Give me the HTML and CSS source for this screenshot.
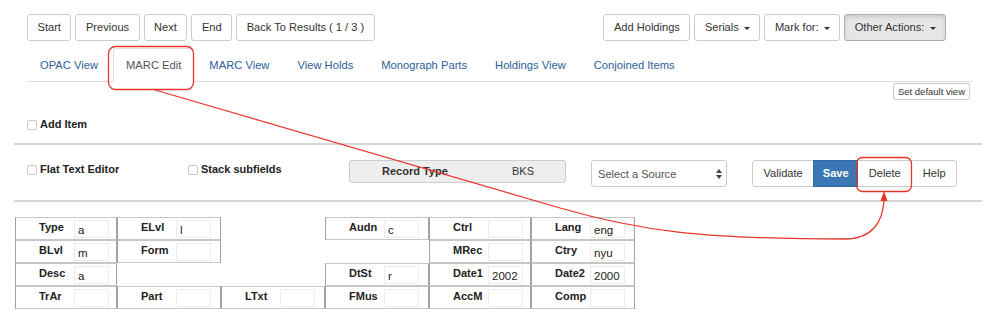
FILE: index.html
```html
<!DOCTYPE html>
<html lang="en">
<head>
    <meta charset="UTF-8">
    <meta name="viewport" content="width=device-width, initial-scale=1.0">
    <title>MARC Edit</title>
    <link rel="stylesheet" href="styles.css">
</head>
<body>
    <div class="page">
        <div class="toolbar">
            <div class="btn-row">
                <button class="btn">Start</button>
                <button class="btn">Previous</button>
                <button class="btn">Next</button>
                <button class="btn">End</button>
                <button class="btn">Back To Results ( 1 / 3 )</button>
            </div>
            <div class="btn-row">
                <button class="btn">Add Holdings</button>
                <button class="btn">Serials <span class="caret"></span></button>
                <button class="btn">Mark for: <span class="caret"></span></button>
                <button class="btn btn-active">Other Actions: <span class="caret"></span></button>
            </div>
        </div>

        <ul class="nav-tabs">
            <li><a href="#">OPAC View</a></li>
            <li class="active"><a href="#">MARC Edit</a></li>
            <li><a href="#">MARC View</a></li>
            <li><a href="#">View Holds</a></li>
            <li><a href="#">Monograph Parts</a></li>
            <li><a href="#">Holdings View</a></li>
            <li><a href="#">Conjoined Items</a></li>
        </ul>

        <div class="view-row">
            <button class="btn-xs">Set default view</button>
        </div>

        <div class="add-item">
            <label class="check"><input type="checkbox"> Add Item</label>
        </div>

        <hr class="rule">

        <div class="editor-bar">
            <label class="check flat"><input type="checkbox"> Flat Text Editor</label>
            <label class="check stack"><input type="checkbox"> Stack subfields</label>
            <div class="record-type">
                <span class="rt-label">Record Type</span>
                <span>BKS</span>
            </div>
            <div class="source-select">
                <select>
                    <option>Select a Source</option>
                </select>
                <svg class="select-arrows" width="6" height="10" viewBox="0 0 6 10">
                    <path d="M3 0 L6 4 L0 4 Z M3 10 L6 6 L0 6 Z" fill="#444"/>
                </svg>
            </div>
            <div class="btn-group">
                <button class="btn">Validate</button>
                <button class="btn btn-primary">Save</button>
                <button class="btn">Delete</button>
                <button class="btn">Help</button>
            </div>
        </div>

        <hr class="rule rule-low">

        <!-- fixed fields: empty divs keep the grid holes -->
        <div class="fixed-fields">
            <div class="ff"><span class="ff-label">Type</span><span class="ff-value">a</span></div>
            <div class="ff"><span class="ff-label">ELvl</span><span class="ff-value">l</span></div>
            <div></div>
            <div class="ff"><span class="ff-label">Audn</span><span class="ff-value">c</span></div>
            <div class="ff"><span class="ff-label">Ctrl</span><span class="ff-value"></span></div>
            <div class="ff"><span class="ff-label">Lang</span><span class="ff-value">eng</span></div>

            <div class="ff"><span class="ff-label">BLvl</span><span class="ff-value">m</span></div>
            <div class="ff"><span class="ff-label">Form</span><span class="ff-value"></span></div>
            <div></div>
            <div></div>
            <div class="ff"><span class="ff-label">MRec</span><span class="ff-value"></span></div>
            <div class="ff"><span class="ff-label">Ctry</span><span class="ff-value">nyu</span></div>

            <div class="ff"><span class="ff-label">Desc</span><span class="ff-value">a</span></div>
            <div></div>
            <div></div>
            <div class="ff"><span class="ff-label">DtSt</span><span class="ff-value">r</span></div>
            <div class="ff"><span class="ff-label">Date1</span><span class="ff-value">2002</span></div>
            <div class="ff"><span class="ff-label">Date2</span><span class="ff-value">2000</span></div>

            <div class="ff"><span class="ff-label">TrAr</span><span class="ff-value"></span></div>
            <div class="ff"><span class="ff-label">Part</span><span class="ff-value"></span></div>
            <div class="ff"><span class="ff-label">LTxt</span><span class="ff-value"></span></div>
            <div class="ff"><span class="ff-label">FMus</span><span class="ff-value"></span></div>
            <div class="ff"><span class="ff-label">AccM</span><span class="ff-value"></span></div>
            <div class="ff"><span class="ff-label">Comp</span><span class="ff-value"></span></div>
        </div>
    </div>

    <!-- red callout drawn over the page -->
    <svg class="annotations" width="1000" height="328" viewBox="0 0 1000 328">
        <rect x="108.5" y="46.5" width="85" height="43" rx="7" fill="none" stroke="#e8352a" stroke-width="1.3"/>
        <rect x="856.5" y="157.5" width="55" height="34" rx="6" fill="none" stroke="#e8352a" stroke-width="1.3"/>
        <path d="M155 90 L560 208 C640 231 700 239 845 239 C872 239 883 222 884 200" fill="none" stroke="#e8352a" stroke-width="1.3"/>
        <polygon points="884,191 880.5,201 887.5,201" fill="#e8352a"/>
    </svg>
</body>
</html>
```

FILE: styles.css
```css
body {
    font-family: "Liberation Sans", Arial, sans-serif;
    font-size: 11px;
    color: #333;
    background: #fff;
    margin: 0;
    padding: 0;
}
.page {
    padding: 14px 18px 0 14px;
}
.toolbar {
    display: flex;
    justify-content: space-between;
    margin: 0 36px 0 13px;
}
.btn-row {
    display: flex;
    gap: 4px;
}
.btn {
    font-family: inherit;
    font-size: 11.1px;
    line-height: 15px;
    color: #333;
    background: #fff;
    border: 1px solid #ccc;
    border-radius: 3px;
    padding: 5px 9.5px;
    margin: 0;
    white-space: nowrap;
}
.btn-active {
    background: #e6e6e6;
    border-color: #adadad;
    box-shadow: inset 0 2px 4px rgba(0, 0, 0, 0.12);
}
.caret {
    display: inline-block;
    width: 0;
    height: 0;
    margin-left: 2px;
    vertical-align: middle;
    border-top: 3px solid #333;
    border-left: 3px solid transparent;
    border-right: 3px solid transparent;
}
.nav-tabs {
    display: flex;
    list-style: none;
    margin: 7px 10px 0 13px;
    padding: 0;
    border-bottom: 1px solid #ddd;
    font-size: 11.2px;
}
.nav-tabs li {
    margin-right: 2px;
    margin-bottom: -1px;
}
.nav-tabs a {
    display: block;
    padding: 8px 12px;
    line-height: 16px;
    color: #2d6199;
    text-decoration: none;
    border: 1px solid transparent;
    border-radius: 3px 3px 0 0;
}
.nav-tabs li.active a {
    color: #555;
    background: #fff;
    border-color: #ddd #ddd transparent;
}
.view-row {
    display: flex;
    justify-content: flex-end;
    margin: 1px 12px 0 0;
}
.btn-xs {
    font-family: inherit;
    font-size: 9.5px;
    line-height: 13px;
    color: #333;
    background: #fff;
    border: 1px solid #ccc;
    border-radius: 2px;
    padding: 1px 4px;
    margin: 0;
}
.check {
    display: flex;
    align-items: center;
    font-weight: bold;
    line-height: 15px;
    color: #222;
}
.check input {
    appearance: none;
    -webkit-appearance: none;
    width: 10px;
    height: 10px;
    border: 1px solid #c9c9c9;
    border-radius: 2px;
    background: #fff;
    margin: 0 3px 0 0;
}
.add-item {
    margin: 17px 0 0 13px;
}
.rule {
    border: 0;
    border-top: 2px solid #d6d6d6;
    height: 0;
    margin: 11px 0 0 0;
}
.rule-low {
    margin-top: 13px;
}
.editor-bar {
    display: flex;
    align-items: flex-start;
    padding: 15px 0 0 13px;
}
.editor-bar .check {
    margin-top: 2px;
    width: 161px;
}
.record-type {
    display: flex;
    width: 217px;
    height: 23px;
    box-sizing: border-box;
    line-height: 21px;
    padding-left: 32px;
    background: #eee;
    border: 1px solid #ccc;
    border-radius: 3px;
    margin-right: 25px;
}
.rt-label {
    width: 130px;
    font-weight: bold;
}
.source-select {
    position: relative;
    margin-right: 25px;
}
.source-select select {
    appearance: none;
    -webkit-appearance: none;
    width: 136px;
    height: 27px;
    font-family: inherit;
    font-size: 11.1px;
    color: #555;
    background: #fff;
    border: 1px solid #ccc;
    border-radius: 3px;
    padding: 0 0 0 6px;
    margin: 0;
}
.select-arrows {
    position: absolute;
    right: 5px;
    top: 9px;
}
.btn-group {
    display: flex;
}
.btn-group .btn {
    border-radius: 0;
    margin-left: -1px;
    padding: 5px 10.5px;
}
.btn-group .btn:first-child {
    border-radius: 3px 0 0 3px;
    margin-left: 0;
    padding: 5px 10.5px;
}
.btn-group .btn:last-child {
    border-radius: 0 3px 3px 0;
}
.btn-group .btn-primary {
    color: #fff;
    font-weight: bold;
    background: #3a77b4;
    border-color: #2e6da4;
    position: relative;
    padding: 5px 8.5px;
}
.fixed-fields {
    display: grid;
    grid-template-columns: 102px 104px 104px 104px 102px 104px;
    grid-template-rows: repeat(4, 23px);
    margin: 15px 0 0 1px;
    width: 620px;
}
.ff {
    display: flex;
    box-sizing: border-box;
    border: 1px solid #c6c6c6;
    border-left-color: #a2a2a2;
    border-right-color: #a2a2a2;
    padding-top: 2px;
}
.ff-label {
    width: 58px;
    box-sizing: border-box;
    padding-left: 23px;
    font-weight: bold;
    line-height: 14px;
    color: #222;
}
.ff-value {
    width: 35px;
    height: 18px;
    box-sizing: border-box;
    border: 1px solid #ececec;
    padding: 3px 0 0 3px;
    font-size: 11.5px;
    line-height: 13px;
    color: #222;
}
.annotations {
    position: absolute;
    top: 0;
    left: 0;
    pointer-events: none;
}
```
